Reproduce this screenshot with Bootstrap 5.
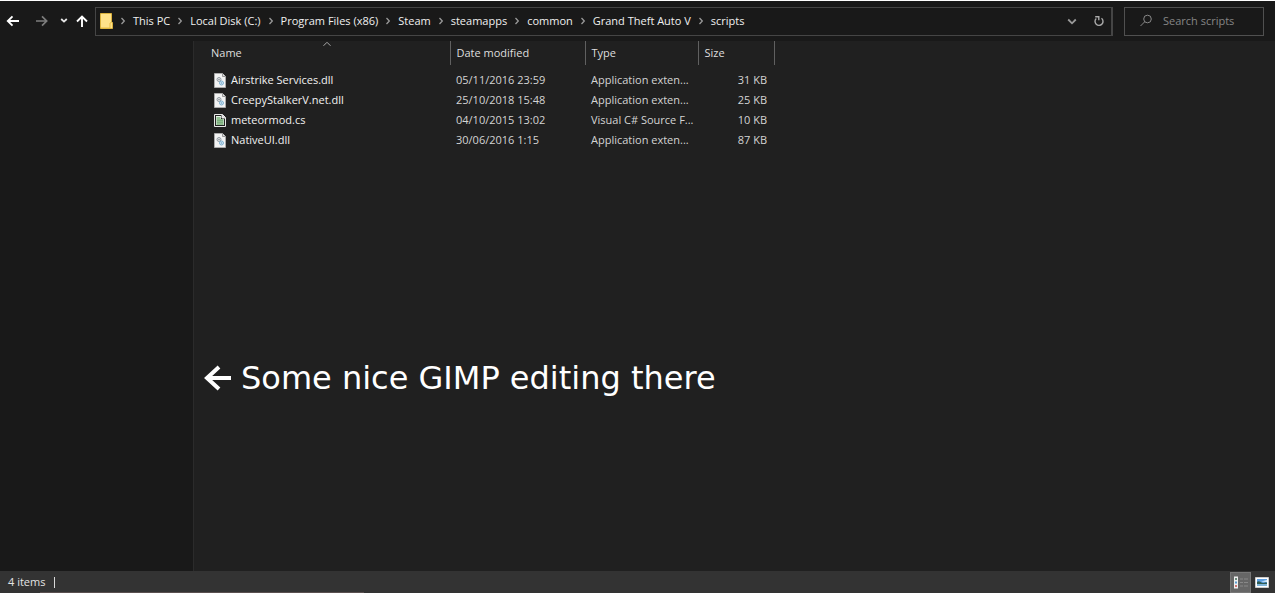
<!DOCTYPE html>
<html lang="en">
<head>
<meta charset="utf-8">
<meta name="viewport" content="width=device-width, initial-scale=1">
<title>scripts</title>
<link href="https://cdn.jsdelivr.net/npm/bootstrap@5.3.0/dist/css/bootstrap.min.css" rel="stylesheet">
<style>
  body { background: #fff; font-family: "Open Sans", "Noto Sans", sans-serif; font-size: 11px; line-height: 20px; color: #e4e4e4; }
  .explorer { padding: 1px 5px 0 0; }
  .toolbar { background: #191919; height: 40px; padding: 0 11px 0 6px; }
  .tool { background: none; border: 0; padding: 0; display: flex; color: #fff; }
  .tool svg, .crumbs svg, .files svg, .statusbar svg, .note svg { display: block; flex: none; }
  .arrows { width: 89px; }
  .address { border: 2px solid #454545; border-width: 1px 2px 1px 1px; height: 29px; padding: 0 6px 0 4px; margin-right: 11px; min-width: 0; }
  .crumbs { gap: 7px; margin-left: 7px; font-weight: 500; white-space: nowrap; }
  .crumbs a { color: #f0f0f0; text-decoration: none; }
  .crumbs li { display: flex; align-items: center; gap: 7px; }
  .search { border: 1px solid #505050; height: 29px; width: 140px; padding: 0 14px; gap: 10px; }
  .search input { background: none; border: 0; outline: 0; padding: 0; min-width: 0; color: #ddd; }
  .search input::placeholder { color: #858585; opacity: 1; }
  .sidebar { background: #191919; width: 193px; flex: none; }
  .pane { background: #202020; border-left: 1px solid #2b2b2b; }
  .files { table-layout: fixed; width: 580px; }
  .files th { height: 24px; padding: 0 6px; font-weight: 400; color: #dedede; border-right: 1px solid #606060; position: relative; }
  .files td { height: 20px; padding: 0 6px; color: #d4d4d4; white-space: nowrap; }
  .files th:first-child { padding-left: 17px; }
  .files td:first-child { padding-left: 19px; color: #f2f2f2; }
  .files td:last-child { padding-right: 7px; }
  .files tbody::before { content: ""; display: block; height: 5px; }
  .sort { position: absolute; top: 0; left: 50%; }
  .note { margin: 204px 0 0 10px; gap: 10px; font: 32px/48px "DejaVu Sans", Verdana, sans-serif; color: #fff; }
  .statusbar { background: #333; height: 22px; padding: 0 3px 0 8px; position: relative; }
  .statusbar::after { content: ""; position: absolute; left: 40px; bottom: 0; width: 324px; height: 1px; background: #5a5050; }
  .caret { width: 1px; height: 11px; background: #d8d8d8; margin-left: 9px; }
  .view { width: 21px; height: 21px; align-items: center; justify-content: center; }
  .view.on { background: #666; border: 1px solid #777; }
</style>
</head>
<body>
<svg class="d-none" aria-hidden="true">
  <symbol id="chev" viewBox="0 0 6 8"><path d="M1.5 1 4.3 4 1.5 7" fill="none" stroke="#999" stroke-width="1.3"/></symbol>
  <symbol id="dll" viewBox="0 0 12 15">
    <path d="M.5.5h8l3 3v11H.5z" fill="#f3f3f3" stroke="#aaa"/><path d="M8.5.5v3h3" fill="#ddd" stroke="#999"/>
    <circle cx="5" cy="6.500" r="2" fill="#e4e8ea" stroke="#949ca2"/><circle cx="5" cy="6.500" r=".8" fill="#8c959b"/>
    <circle cx="7.500" cy="10" r="2" fill="#cfe5f3" stroke="#7fb0cf"/><circle cx="7.500" cy="10" r=".7" fill="#6ea3c5"/>
  </symbol>
  <symbol id="cs" viewBox="0 0 12 13">
    <path d="M.5.5h8l3 3v9H.5z" fill="#222" stroke="#e8e8e8"/><path d="M8 .5V4h3.500" fill="#eee" stroke="#e8e8e8"/>
    <path d="M2 2h5v3h3v6H2z" fill="#e9f2e9"/><path d="M2.500 3h4v2h3v6h-7z" fill="#8fbd8f"/><path d="M3 6.500h6M3 8.500h6" stroke="#6fa471" stroke-width=".6"/>
  </symbol>
</svg>
<div class="explorer vh-100 d-flex flex-column">
  <header class="toolbar d-flex align-items-center">
    <div class="arrows d-flex align-items-center flex-shrink-0">
      <button class="tool" aria-label="Back"><svg width="14" height="12" viewBox="0 0 14 12"><path d="M13 6H2M6.500 1.300 1.800 6l4.700 4.700" fill="none" stroke="#fff" stroke-width="1.900"/></svg></button>
      <button class="tool ms-3" aria-label="Forward"><svg width="12" height="12" viewBox="0 0 12 12"><path d="M0 6h10.500M6 1.300 10.700 6 6 10.700" fill="none" stroke="#7d7d7d" stroke-width="1.700"/></svg></button>
      <button class="tool ms-2 ps-1" aria-label="Recent locations"><svg width="8" height="12" viewBox="0 0 8 12"><path d="M1.200 4 4 6.600 6.800 4" fill="none" stroke="#e8e8e8" stroke-width="1.800"/></svg></button>
      <button class="tool ms-2" aria-label="Up"><svg width="12" height="12" viewBox="0 0 12 12"><path d="M6 12V2M1 6.500 6 1.500l5 5" fill="none" stroke="#fff" stroke-width="1.900"/></svg></button>
    </div>
    <nav class="address d-flex align-items-center flex-grow-1" aria-label="Path">
      <svg class="flex-shrink-0" width="13" height="16" viewBox="0 0 13 16"><path d="M.5.5h11v8l1 1v6H.5z" fill="#ffe28a" stroke="#d9b13d"/><path d="M1 15h9v-5l2-1" fill="none" stroke="#e8bd45"/></svg>
      <ol class="crumbs list-unstyled d-flex mb-0">
        <li><svg width="6" height="8"><use href="#chev"/></svg><a href="#">This PC</a></li>
        <li><svg width="6" height="8"><use href="#chev"/></svg><a href="#">Local Disk (C:)</a></li>
        <li><svg width="6" height="8"><use href="#chev"/></svg><a href="#">Program Files (x86)</a></li>
        <li><svg width="6" height="8"><use href="#chev"/></svg><a href="#">Steam</a></li>
        <li><svg width="6" height="8"><use href="#chev"/></svg><a href="#">steamapps</a></li>
        <li><svg width="6" height="8"><use href="#chev"/></svg><a href="#">common</a></li>
        <li><svg width="6" height="8"><use href="#chev"/></svg><a href="#">Grand Theft Auto V</a></li>
        <li><svg width="6" height="8"><use href="#chev"/></svg><a href="#" aria-current="page">scripts</a></li>
      </ol>
      <button class="tool ms-auto" aria-label="Previous locations"><svg width="10" height="12" viewBox="0 0 10 12"><path d="M1.200 4.500 5 8.300l3.800-3.800" fill="none" stroke="#999" stroke-width="1.800"/></svg></button>
      <button class="tool ms-3" aria-label="Refresh"><svg width="12" height="12" viewBox="0 0 12 12"><path d="M8.500 3.200A4 4 0 1 1 3.300 3.400M2.200 1.800h3.600v3.400" fill="none" stroke="#aaa" stroke-width="1.400"/></svg></button>
    </nav>
    <label class="search d-flex align-items-center flex-shrink-0">
      <svg class="flex-shrink-0" width="14" height="14" viewBox="0 0 14 14"><circle cx="8.500" cy="5" r="3.800" fill="none" stroke="#888"/><path d="M5.800 7.700 1.500 12" stroke="#888"/></svg>
      <input class="flex-grow-1" type="text" placeholder="Search scripts" aria-label="Search scripts">
    </label>
  </header>
  <div class="d-flex flex-grow-1">
    <aside class="sidebar"></aside>
    <main class="pane flex-grow-1">
      <table class="files">
        <colgroup><col style="width:256px"><col style="width:135px"><col style="width:113px"><col style="width:76px"></colgroup>
        <thead>
          <tr>
            <th scope="col">Name<svg class="sort" width="10" height="6" viewBox="0 0 10 6"><path d="M1.500 4.800 5 1.300l3.500 3.500" fill="none" stroke="#aaa"/></svg></th>
            <th scope="col">Date modified</th><th scope="col">Type</th><th scope="col">Size</th>
          </tr>
        </thead>
        <tbody>
          <tr><td><div class="d-flex align-items-center gap-1"><svg width="14" height="15"><use href="#dll"/></svg>Airstrike Services.dll</div></td><td>05/11/2016 23:59</td><td>Application exten...</td><td class="text-end">31 KB</td></tr>
          <tr><td><div class="d-flex align-items-center gap-1"><svg width="14" height="15"><use href="#dll"/></svg>CreepyStalkerV.net.dll</div></td><td>25/10/2018 15:48</td><td>Application exten...</td><td class="text-end">25 KB</td></tr>
          <tr><td><div class="d-flex align-items-center gap-1"><svg width="14" height="13"><use href="#cs"/></svg>meteormod.cs</div></td><td>04/10/2015 13:02</td><td>Visual C# Source F...</td><td class="text-end">10 KB</td></tr>
          <tr><td><div class="d-flex align-items-center gap-1"><svg width="14" height="15"><use href="#dll"/></svg>NativeUI.dll</div></td><td>30/06/2016 1:15</td><td>Application exten...</td><td class="text-end">87 KB</td></tr>
        </tbody>
      </table>
      <p class="note d-flex align-items-center"><svg width="27" height="26" viewBox="0 0 27 26"><path d="M27 13H3M15 2 3 13l12 11" fill="none" stroke="#fff" stroke-width="4"/></svg>Some nice GIMP editing there</p>
    </main>
  </div>
  <footer class="statusbar d-flex align-items-center">
    <span>4 items</span><span class="caret"></span>
    <button class="tool view on ms-auto" aria-label="Details view"><svg width="16" height="13" viewBox="0 0 16 13"><path d="M1 .5h4v12H1z" fill="#eee"/><path d="M2 2h2v2H2z" fill="#6c8a7a"/><path d="M2 5.500h2v2H2z" fill="#5b9bd0"/><path d="M2 9h2v2H2z" fill="#d07070"/><path d="M7 3h3m1 0h4M7 6.500h3m1 0h4M7 10h3m1 0h4" stroke="#888"/></svg></button>
    <button class="tool view" aria-label="Large icons view"><svg width="14" height="11" viewBox="0 0 14 11"><path d="M.5.500h13v10H.5z" fill="#fff" stroke="#ccc"/><path d="M2 2h10v7H2z" fill="#5e9fe0"/><path d="M2 5c2-2 4 1 6 1s3-1 4 0v1H2z" fill="#2f5d55"/><path d="M6 4.500 12 3v2z" fill="#d8ecfa"/><path d="M2 7h10v2H2z" fill="#7fb4d8"/></svg></button>
  </footer>
</div>
<script src="https://cdn.jsdelivr.net/npm/bootstrap@5.3.0/dist/js/bootstrap.bundle.min.js"></script>
</body>
</html>
